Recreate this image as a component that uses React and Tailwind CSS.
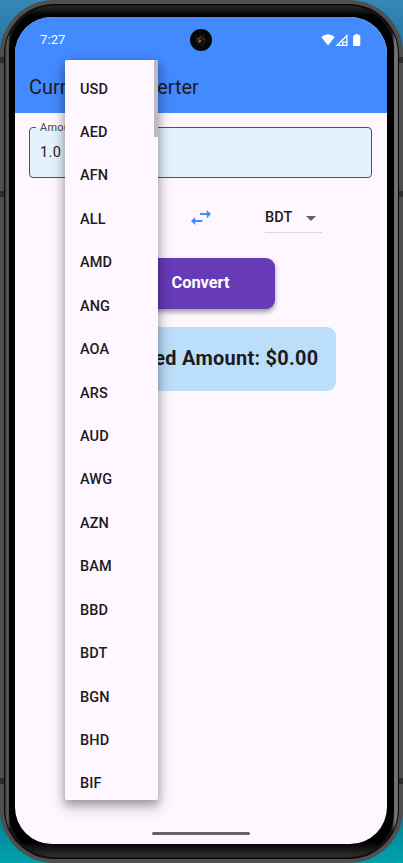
import React from 'react';

const currencies = ['USD', 'AED', 'AFN', 'ALL', 'AMD', 'ANG', 'AOA', 'ARS', 'AUD', 'AWG', 'AZN', 'BAM', 'BBD', 'BDT', 'BGN', 'BHD', 'BIF'];

function Camera() {
  return (
    <div className="flex h-[22px] w-[22px] items-center justify-center rounded-full bg-[#060606]">
      <svg width="14" height="14" viewBox="0 0 14 14" fill="none">
        <circle cx="7" cy="7" r="6" fill="#15110f" />
        <path d="M4 5Q3 8 6 10M7 3Q4.6 5 6 8" stroke="#665044" strokeWidth="1" />
        <path d="M8 5Q10 5 10 7" stroke="#6b4057" strokeWidth="1" />
        <circle cx="6" cy="8" r="1" fill="#8a8176" />
      </svg>
    </div>
  );
}

function StatusBar() {
  return (
    <div className="grid h-[45px] grid-cols-[1fr_22px_1fr] items-center px-[25px] text-white">
      <span className="text-[13px] leading-none tracking-[0.1px]">7:27</span>
      <Camera />
      <svg className="justify-self-end" width="42" height="14" viewBox="0 0 42 14" fill="#fff">
        <path d="M1.2 4Q8 -1.6 14.8 4L8 12.5Z" />
        <path fillRule="evenodd" d="M27.5 1V13H15.5ZM26.2 4.3L18.7 11.7H22V8.5H26.2ZM23.4 9.7V11.7H26.2V9.7Z" />
        <path d="M35.2 1h3v1.2h1.2q.9 0 .9.9v9q0 .9-.9.9h-5.4q-.9 0-.9-.9v-9q0-.9.9-.9h1.2z" />
      </svg>
    </div>
  );
}

function CurrencyMenu() {
  return (
    <div className="absolute left-[50px] top-[43px] flex h-[740px] w-[93px] items-start overflow-hidden rounded-[2px] bg-[#fef7ff] shadow-[0_4px_8px_rgba(0,0,0,0.28),0_6px_14px_3px_rgba(0,0,0,0.17)]">
      <ul className="flex flex-1 flex-col pt-[7.8px]">
        {currencies.map((code) => (
          <li key={code} className="flex h-[43.43px] items-center pl-[15px] text-[14.5px] font-medium tracking-[0.1px]">
            {code}
          </li>
        ))}
      </ul>
      <div className="h-[77px] w-[4px] bg-[#bfbac0]" />
    </div>
  );
}

function SideRail() {
  return (
    <div className="flex w-[4px] flex-col bg-[#4e4e4e] pb-[79px] pt-[57px]">
      <i className="h-[6px] bg-[#2d2d2d]" />
      <div className="h-[128px]" />
      <i className="h-[6px] bg-[#2d2d2d]" />
      <div className="flex-1" />
      <i className="h-[6px] bg-[#2d2d2d]" />
    </div>
  );
}

export default function App() {
  return (
    <div className="h-[863px] w-[403px] overflow-hidden bg-[linear-gradient(180deg,#3587b5_0%,#2878a7_5%,#075773_88%,#00a3ad_100%)] font-[Roboto,sans-serif]">
      <div className="flex h-[863px] overflow-hidden rounded-[54px] bg-[#505050]">
        <SideRail />
        <div className="flex-1 py-[4px]">
          <div className="h-full rounded-[50px] bg-[#090909] p-px">
            <div className="h-full rounded-[49px] bg-[linear-gradient(90deg,#343434_0px,#606060_3px,#151515_5px,#151515_387px,#777_390px,#666_393px)] px-[4px] py-px">
              <div className="h-full rounded-[45px] bg-[linear-gradient(180deg,#292929_0px,#000_10px,#000_836px,#303030_851px)] px-[6px] pb-[13px] pt-[11px]">
                <main className="relative flex h-[827px] w-[372px] flex-col overflow-hidden rounded-[37px] bg-[#fef7ff] text-[#1d1b20]">
                  <header className="h-[96px] bg-[#448aff]">
                    <StatusBar />
                    <h1 className="flex h-[51px] items-center px-[14px] text-[19.9px] font-normal">Currency Converter</h1>
                  </header>
                  <div className="flex flex-1 flex-col gap-[18px] pb-[9px] pl-[14px] pr-[15px] pt-[14px]">
                    <div className="relative flex h-[51px] items-center rounded-[4px] border border-[#53505a] bg-[#e3f2fd] px-[10px] text-[14.5px] tracking-[0.45px]">
                      1.0
                      <span className="absolute left-[6px] top-[-7px] bg-[linear-gradient(180deg,#fef7ff_7px,#e3f2fd_7px)] px-[4px] text-[10.9px] leading-[14px] tracking-[0.3px] text-[#49454f]">Amount</span>
                    </div>
                    <div className="flex h-[43.5px] items-start justify-between pl-[36px] pr-[50px]">
                      <div className="flex h-[37px] w-[57px] items-center border-b border-[#ddd6de] pt-[8px] text-[14.5px] font-medium">USD</div>
                      <div className="flex h-[44px] flex-1 items-center justify-center pl-[14px]">
                        <svg width="22" height="22" viewBox="0 0 22 22" fill="#448aff">
                          <path d="M5.2 10 1 14l4.200 4v-3.100H12.500v-2H5.200zM16.800 3v3.100H10v2h6.800v3.100L21 7z" />
                        </svg>
                      </div>
                      <div className="flex h-[37px] w-[57px] items-center justify-between border-b border-[#ddd6de] pr-[6px] pt-[8px] text-[14.5px] font-medium tracking-[0.1px]">
                        BDT
                        <svg width="10" height="5" viewBox="0 0 10 5" fill="#616161"><path d="M0 0h10L5 5z" /></svg>
                      </div>
                    </div>
                    <div className="flex flex-col items-center gap-[18px]">
                      <button className="h-[51px] w-[149px] rounded-[9px] bg-[#673ab7] text-[16.4px] font-bold text-white shadow-[0_3px_5px_rgba(0,0,0,0.38)]">Convert</button>
                      <div className="flex h-[64px] w-[271px] items-center justify-end whitespace-nowrap rounded-[9px] bg-[#bbdefb] pr-[17.5px] text-[19.9px] font-bold tracking-[0.3px]">
                        Converted Amount: $0.00
                      </div>
                    </div>
                    <div className="mt-auto h-[3px] w-[98px] self-center rounded-full bg-[#68636a]" />
                  </div>
                  <CurrencyMenu />
                </main>
              </div>
            </div>
          </div>
        </div>
        <SideRail />
      </div>
    </div>
  );
}
